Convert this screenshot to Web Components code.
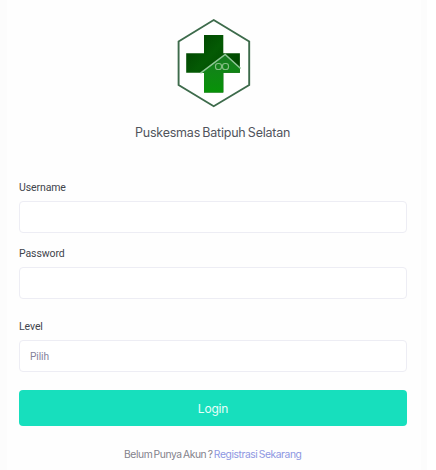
<!DOCTYPE html>
<html lang="id">
<head>
<meta charset="utf-8">
<title>Puskesmas Batipuh Selatan</title>
<style>
html,body{margin:0;background:#fff}
body{width:436px;height:470px;overflow:hidden;font-family:Roboto,"Liberation Sans",sans-serif}
</style>
</head>
<body>
<login-page></login-page>
<script>
class BaseElement extends HTMLElement {
  constructor() {
    super();
    this.attachShadow({mode: "open"}).innerHTML = this.view();
  }
}
customElements.define("clinic-logo", class extends BaseElement {
  view() { return `<style>:host{display:block;width:76px;height:92px}svg{display:block}</style>
<svg width="76" height="92" viewBox="176 17 76 92">
<defs><linearGradient id="g" x1="0" y1="0" x2="1" y2="1"><stop offset="0" stop-color="#003f00"/><stop offset=".4" stop-color="#045a04"/><stop offset=".7" stop-color="#004800"/></linearGradient>
<linearGradient id="h" x1="0" y1="0" x2="0" y2="1"><stop offset="0" stop-color="#187a22"/><stop offset="1" stop-color="#079307"/></linearGradient></defs>
<path d="M213.700 20 249.200 41.500V85L213.700 106.200 178.600 85V41.500Z" fill="#fff" stroke="#3d6b4b" stroke-width="1.900"/>
<path d="M204 35h19.300v18.200h16.600v19.600h-16.600v19.700H204V72.800h-17.800V53.200H204Z" fill="url(#g)"/>
<path d="M201.500 72.800 225.200 54.500 239.900 67.500v5.300h-16.600v19.700H204V72.800Z" fill="url(#h)"/>
<path d="M200.500 73.200 225.200 54.500 240.600 68.500" fill="none" stroke="#8fc796" stroke-width="1.500"/>
<g fill="none" stroke="#83bd83" stroke-width="1.200"><rect x="215.500" y="63.500" width="6" height="6" rx="2.500"/><rect x="222.500" y="63.500" width="6" height="6" rx="2.500"/></g>
</svg>`; }
});
customElements.define("form-field", class extends BaseElement {
  view() { return `<style>
:host{display:block}
.label{display:block;height:15px;line-height:16px;padding-top:1px;margin-bottom:6px;font-size:10.500px;letter-spacing:-.1px;color:#41444c}
.box{box-sizing:border-box;height:32px;border:1px solid #ededf4;border-radius:4px;padding-left:10px;line-height:31px;font-size:10.200px;letter-spacing:-.1px;color:#85829b;background:#fff}
</style><span class="label"><slot name="label"></slot></span><div class="box"><slot></slot></div>`; }
});
customElements.define("login-button", class extends BaseElement {
  view() { return `<style>:host{display:block}
button{display:block;width:100%;height:36px;border:0;border-radius:4px;padding:0;background:#17dfbd;color:#e6fffa;font:12px Inter,sans-serif;letter-spacing:-.2px;line-height:37px}</style><button type="button"><slot></slot></button>`; }
});
customElements.define("login-page", class extends BaseElement {
  view() { return `<style>
:host{display:block;width:427px;height:470px;background:#fcfcfc}
main{box-sizing:border-box;width:414px;height:470px;margin-left:7px;padding:17px 14px 0 12px;background:#fefefe;display:flex;flex-direction:column}
clinic-logo{margin-left:157px}
h1{margin:15px 0 0 116px;font:400 12.500px/18px Inter,sans-serif;letter-spacing:-.22px;word-spacing:-1px;color:#51545c;white-space:nowrap}
form-field{margin-top:12px}
.first{margin-top:37px}.level{margin-top:19px}
login-button{margin-top:18px}
p{margin:20px 0 0 105px;font:10.300px/16px Inter,sans-serif;letter-spacing:-.42px;word-spacing:-1.100px;color:#83818b;white-space:nowrap}
a{color:#8d97e2;text-decoration:none}
</style><main>
<clinic-logo></clinic-logo>
<h1>Puskesmas Batipuh Selatan</h1>
<form-field class="first"><span slot="label">Username</span></form-field>
<form-field><span slot="label">Password</span></form-field>
<form-field class="level"><span slot="label">Level</span>Pilih</form-field>
<login-button>Login</login-button>
<p>Belum Punya Akun ? <a href="#">Registrasi Sekarang</a></p>
</main>`; }
});
</script>
</body>
</html>
